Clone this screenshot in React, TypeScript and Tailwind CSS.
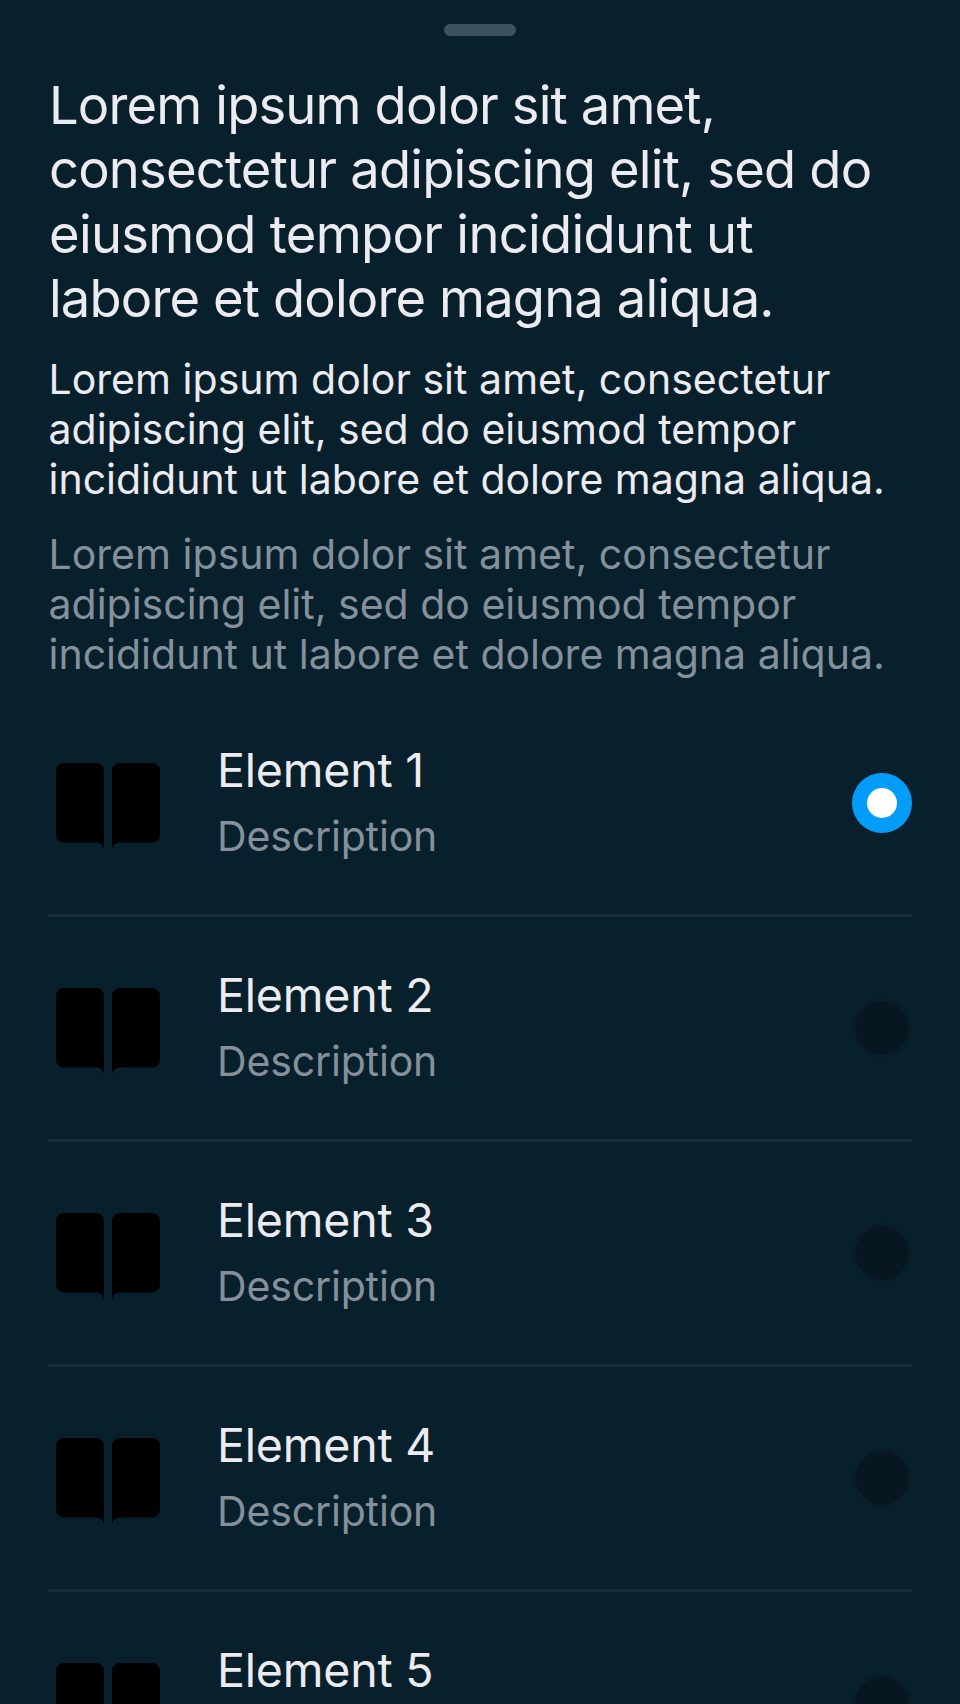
import React from "react";

const items = ["Element 1", "Element 2", "Element 3", "Element 4", "Element 5"];

function BookIcon() {
  return (
    <svg width="120" height="120" viewBox="0 0 120 120" className="shrink-0" fill="#000">
      <path d="M16 20H48A8 8 0 0 1 56 28V106Q54.500 99.500 48 99.500H16A8 8 0 0 1 8 91.500V28A8 8 0 0 1 16 20Z" />
      <path d="M104 20H72A8 8 0 0 0 64 28V106Q65.500 99.500 72 99.500H104A8 8 0 0 0 112 91.500V28A8 8 0 0 0 104 20Z" />
    </svg>
  );
}

function Radio({ checked }: { checked: boolean }) {
  return checked ? (
    <span className="flex size-[60px] shrink-0 items-center justify-center rounded-full bg-[#039df9]">
      <span className="size-[30px] rounded-full bg-white" />
    </span>
  ) : (
    <span className="flex size-[60px] shrink-0 items-center justify-center rounded-full border border-[#071c28]">
      <span className="size-[54px] rounded-full bg-[#061722]" />
    </span>
  );
}

function Row({ title, checked }: { title: string; checked: boolean }) {
  return (
    <li className="flex h-[225px] shrink-0 items-center border-b-[3px] border-[#172b37]">
      <BookIcon />
      <div className="ml-[49px] flex grow flex-col pb-[3px] whitespace-nowrap">
        <span className="mb-[13px] text-[46.5px] leading-[56px] tracking-[-0.2px] text-[#ebebf0]">{title}</span>
        <span className="text-[41px] leading-[50px] tracking-[-0.15px] text-[#84919a]">Description</span>
      </div>
      <Radio checked={checked} />
    </li>
  );
}

export default function App() {
  return (
    <main className="flex h-[1704px] w-[960px] flex-col overflow-hidden bg-[#081f2c] px-12 pt-6 font-['Inter',sans-serif]">
      <div className="h-3 w-[72px] shrink-0 self-center rounded-full bg-[#3e525e]" />
      <h1 className="mt-[37px] flex shrink-0 flex-col pl-px text-[52.5px] leading-[64.3px] whitespace-nowrap text-[#ebebf0]">
        <span className="tracking-[-0.85px]">Lorem ipsum dolor sit amet,</span>
        <span className="tracking-[-0.8px]">consectetur adipiscing elit, sed do</span>
        <span className="tracking-[-0.7px]">eiusmod tempor incididunt ut</span>
        <span className="tracking-[-0.86px]">labore et dolore magna aliqua.</span>
      </h1>
      {["mt-6 text-[#ebebf0]", "mt-[25px] text-[#84919a]"].map((tone) => (
        <p key={tone} className={`flex shrink-0 flex-col pl-[0.5px] text-[41px] leading-[50px] whitespace-nowrap ${tone}`}>
          <span className="tracking-[0.03px]">Lorem ipsum dolor sit amet, consectetur</span>
          <span>adipiscing elit, sed do eiusmod tempor</span>
          <span>incididunt ut labore et dolore magna aliqua.</span>
        </p>
      ))}
      <ul className="mt-[13px] flex shrink-0 flex-col">
        {items.map((title, i) => (
          <Row key={title} title={title} checked={i === 0} />
        ))}
      </ul>
    </main>
  );
}
